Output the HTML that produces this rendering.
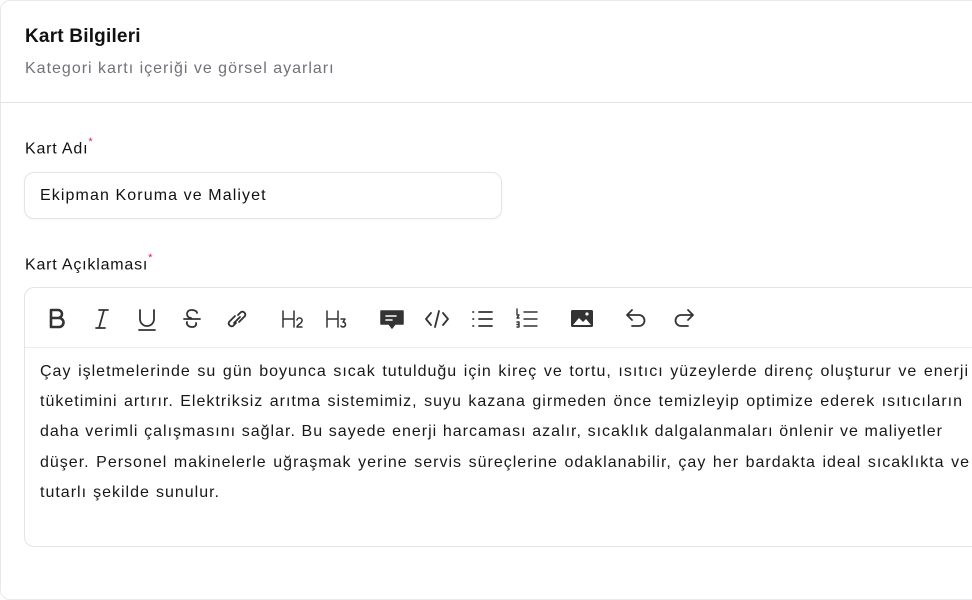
<!DOCTYPE html>
<html><head><meta charset="utf-8"><style>
*{box-sizing:border-box;margin:0;padding:0}
body{width:972px;height:505px;overflow:hidden;background:#fff;font-family:"Liberation Sans",sans-serif;color:#111}
.card{position:absolute;left:0;top:0;width:990px;height:600px;border:1px solid #e8e8ea;border-radius:10px}
.h{position:absolute;left:25px;top:26px;font-size:19px;font-weight:bold;color:#111;letter-spacing:0.2px}
.sub{position:absolute;left:25px;top:60px;font-size:16px;color:#71717a;letter-spacing:1px}
.div{position:absolute;left:0;top:102px;width:972px;height:1px;background:#e4e4e7}
.lbl{position:absolute;left:25px;font-size:16px;color:#111;letter-spacing:0.8px}
.lbl sup{color:#e11d48;font-size:11px;position:relative;top:-2px}
.inp{position:absolute;left:24px;top:172px;width:478px;height:47px;border:1px solid #e4e4e7;border-radius:10px;padding:14px 15px;font-size:16px;letter-spacing:1.1px;box-shadow:0 1px 2px rgba(0,0,0,.04)}
.ed{position:absolute;left:24px;top:287px;width:970px;height:260px;border:1px solid #e4e4e7;border-radius:10px}
.tb{height:60px;border-bottom:1px solid #ececee}
.txt{position:absolute;left:40px;top:357px;font-size:16px;line-height:30.2px;color:#18181b;letter-spacing:1px}
.txt div{width:929px;text-align:justify;text-align-last:justify;white-space:nowrap;overflow:visible}
</style></head><body>
<div class="card"></div>
<div class="h">Kart Bilgileri</div>
<div class="sub">Kategori kartı içeriği ve görsel ayarları</div>
<div class="div"></div>
<div class="lbl" style="top:138px">Kart Adı<sup>*</sup></div>
<div class="inp">Ekipman Koruma ve Maliyet</div>
<div class="lbl" style="top:254px">Kart Açıklaması<sup>*</sup></div>
<div class="ed"><div class="tb"></div></div>
<svg width="972" height="505" style="position:absolute;left:0;top:0" fill="none" stroke="#333" stroke-width="1.8" stroke-linecap="round" stroke-linejoin="round">
<path d="M51 310h7a4 4 0 010 8h-7zM51 318h8a4.5 4.5 0 010 9h-8z" stroke-width="2.6"/>
<path d="M99 310h9M96 328h9M104 310l-5 18"/>
<path d="M140 310v9a7 7 0 0014 0v-9M139 330h16"/>
<path d="M184 319h16M197 313a5 3 0 00-5-3h-1a4 4 0 000 8M187 322a5 4 0 005 5a4 3 0 004-4"/>
<path d="M235 316l-6 6a3 3 0 004 4l3-3M239 322l6-6a3 3 0 00-4-4l-3 3M234 323l6-6"/>
<path d="M283 311v16M294 311v16M283 319h11M297 320a2.5 2.5 0 015 1c0 2-5 4-5 6h5" stroke-width="1.5"/>
<path d="M327 311v16M338 311v16M327 319h11M341 319h4l-2 3a2.5 2.5 0 11-2 4" stroke-width="1.5"/>
<path d="M381 311h22v13h-8l-3 4-3-4h-8z" fill="#333" stroke-width="1.5"/>
<path d="M386 316h10M386 320h6" stroke="#fff" stroke-width="1.6"/>
<path d="M431 313l-5 6 5 6M443 313l5 6-5 6M439 311l-4 16"/>
<path d="M473 312h.5M473 319h.5M473 326h.5M479 312h13M479 319h13M479 326h13"/>
<path d="M524 312h13M524 319h13M524 326h13M517 309v5M517 315h2l-2 3h2M517 322h2v5h-2M517 324.5h2" stroke-width="1.4"/>
<rect x="571" y="310" width="22" height="17" rx="1.5" fill="#333" stroke="none"/>
<path d="M573 325l6-7 4 4 3-3 5 6z" fill="#fff" stroke="none"/><circle cx="587" cy="314" r="1.6" fill="#fff" stroke="none"/>
<path d="M632 310l-5 5 5 5M627 315h12a5 5 0 010 11h-7"/>
<path d="M688 310l5 5-5 5M693 315h-12a5 5 0 000 11h7"/>
</svg>
<div class="txt">
<div>Çay işletmelerinde su gün boyunca sıcak tutulduğu için kireç ve tortu, ısıtıcı yüzeylerde direnç oluşturur ve enerji</div>
<div style="width:923px">tüketimini artırır. Elektriksiz arıtma sistemimiz, suyu kazana girmeden önce temizleyip optimize ederek ısıtıcıların</div>
<div style="width:903px">daha verimli çalışmasını sağlar. Bu sayede enerji harcaması azalır, sıcaklık dalgalanmaları önlenir ve maliyetler</div>
<div style="width:930px">düşer. Personel makinelerle uğraşmak yerine servis süreçlerine odaklanabilir, çay her bardakta ideal sıcaklıkta ve</div>
<div style="width:180px">tutarlı şekilde sunulur.</div>
</div>
</body></html>
